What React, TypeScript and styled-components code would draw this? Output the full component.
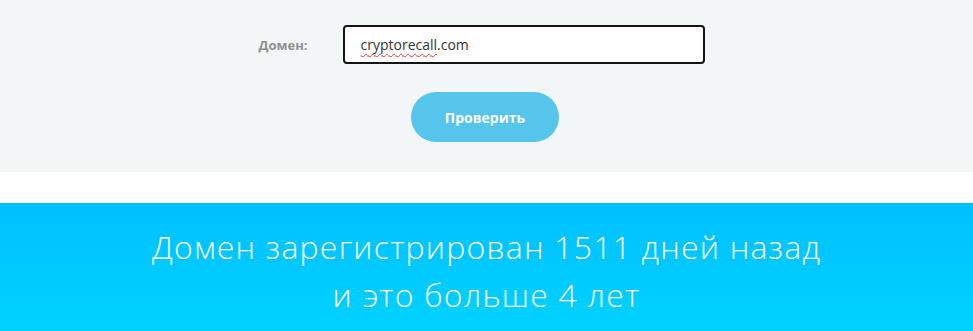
import React from "react";
import styled, { createGlobalStyle } from "styled-components";

const GlobalStyle = createGlobalStyle`
  html, body {
    margin: 0;
    padding: 0;
    background: #ffffff;
    font-family: "Open Sans", "Liberation Sans", sans-serif;
    overflow: hidden;
  }
`;

const FormSection = styled.section`
  background-color: #f3f6f7;
  padding: 25px 0 30px;
  height: 172px;
  box-sizing: border-box;
  display: flex;
  flex-direction: column;
  align-items: center;
  gap: 28px;
`;

const FieldRow = styled.div`
  display: flex;
  align-items: center;
  gap: 34px;
  padding-right: 10px;
`;

const Label = styled.label`
  font-size: 13px;
  font-weight: 700;
  color: #8f8f8f;
  width: 50px;
  white-space: nowrap;
`;

const InputBox = styled.div`
  width: 362px;
  height: 39px;
  box-sizing: border-box;
  border: 2px solid #141414;
  border-radius: 4px;
  background: #ffffff;
  display: flex;
  align-items: center;
  padding: 0 16px;
  font-size: 14px;
  color: #333333;
`;

const Misspelled = styled.span`
  text-decoration: underline wavy #e03131;
  text-decoration-thickness: 1px;
  text-underline-offset: 3px;
`;

const CheckButton = styled.button`
  width: 148px;
  height: 50px;
  margin-right: 3px;
  border: none;
  border-radius: 25px;
  background-color: #55c5ec;
  color: #ffffff;
  font-family: inherit;
  font-size: 14px;
  font-weight: 700;
  cursor: pointer;
`;

const Spacer = styled.div`
  height: 31px;
  background: #ffffff;
`;

const ResultSection = styled.section`
  background: linear-gradient(180deg, #00c0ff 0%, #00d2ff 100%);
  padding: 20px 0 0;
  height: 128px;
  box-sizing: border-box;
  text-align: center;
`;

const ResultText = styled.p`
  margin: 0;
  color: #ffffff;
  font-size: 32px;
  font-weight: 300;
  letter-spacing: 1.2px;
  line-height: 48px;
`;

const App = () => {
  return (
    <>
      <GlobalStyle />
      <FormSection>
        <FieldRow>
          <Label>Домен:</Label>
          <InputBox>
            <Misspelled>cryptorecall</Misspelled>.com
          </InputBox>
        </FieldRow>
        <CheckButton>Проверить</CheckButton>
      </FormSection>
      <Spacer />
      <ResultSection>
        <ResultText>
          Домен зарегистрирован 1511 дней назад
          <br />
          и это больше 4 лет
        </ResultText>
      </ResultSection>
    </>
  );
};

export default App;
